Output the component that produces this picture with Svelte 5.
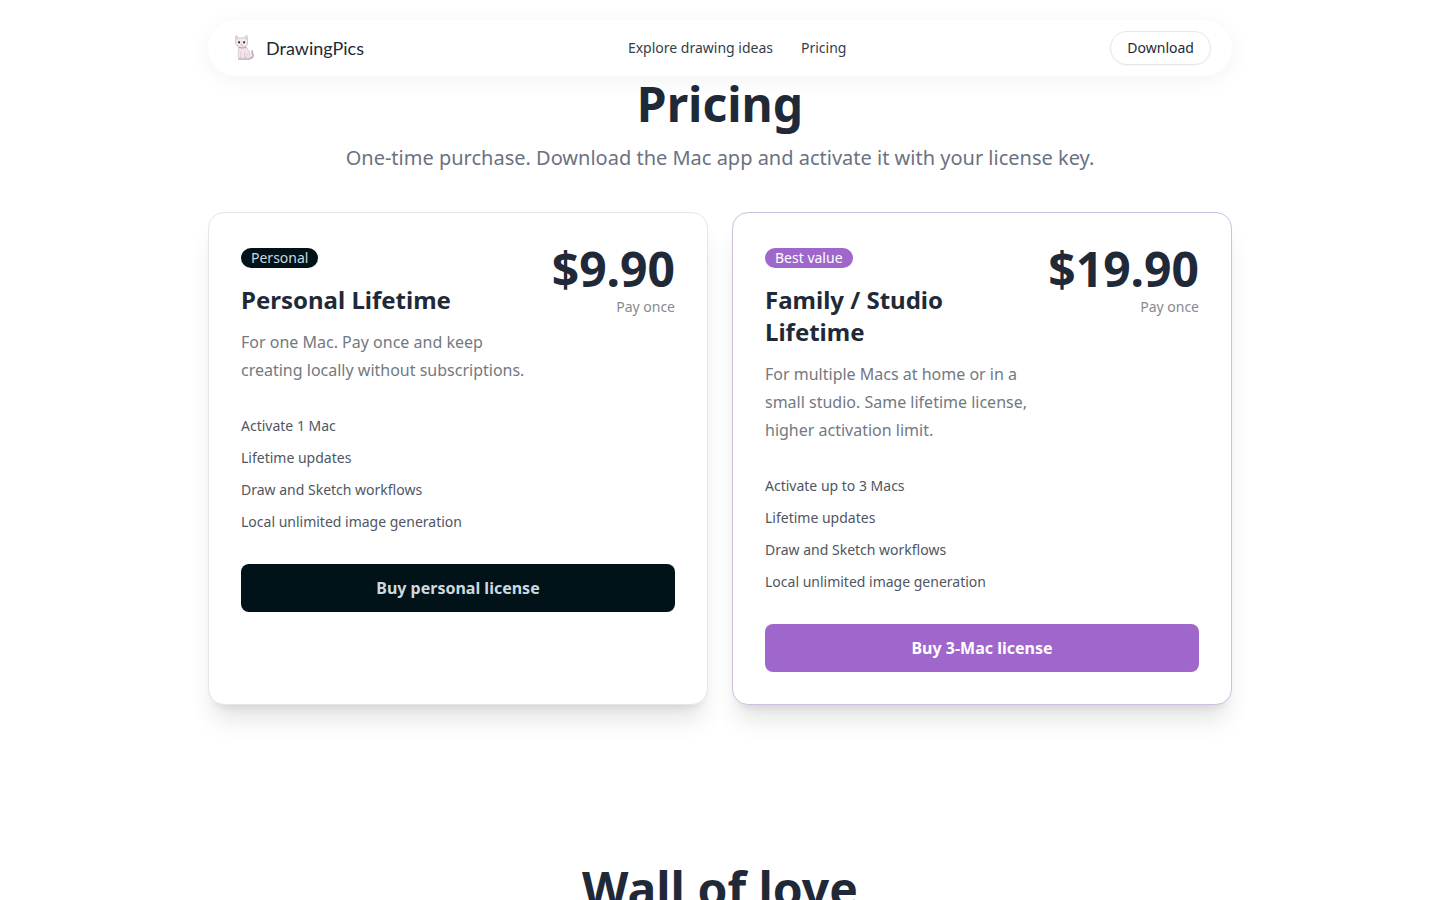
<script lang="ts">
	interface Plan {
		id: string;
		badge: string;
		name: string;
		description: string;
		price: string;
		features: string[];
		cta: string;
		featured: boolean;
	}

	const plans: Plan[] = [
		{
			id: 'personal',
			badge: 'Personal',
			name: 'Personal Lifetime',
			description: 'For one Mac. Pay once and keep creating locally without subscriptions.',
			price: '$9.90',
			features: ['Activate 1 Mac', 'Lifetime updates', 'Draw and Sketch workflows', 'Local unlimited image generation'],
			cta: 'Buy personal license',
			featured: false
		},
		{
			id: 'family',
			badge: 'Best value',
			name: 'Family / Studio Lifetime',
			description: 'For multiple Macs at home or in a small studio. Same lifetime license, higher activation limit.',
			price: '$19.90',
			features: ['Activate up to 3 Macs', 'Lifetime updates', 'Draw and Sketch workflows', 'Local unlimited image generation'],
			cta: 'Buy 3-Mac license',
			featured: true
		}
	];
</script>

<div class="page">
	<header class="navbar">
		<a class="brand" href="#top">
			<svg class="cat" viewBox="0 0 24 28" aria-hidden="true">
				<path d="M15.500 24.300c3 .2 4.600-1.400 4.400-3.200-.1-1.500-1.300-2.200-.8-3.900" fill="none" stroke="#b79bae" stroke-width="1.800" stroke-linecap="round" />
				<path d="M15.800 24c2.600.1 3.500-1.300 3.400-2.800-.1-1.300-1-2.200-.6-3.600" fill="none" stroke="#eddde7" stroke-width=".8" stroke-linecap="round" />
				<path d="M6 12.500c-.9 4-.9 8.500-.5 12.500h10.900c1.500-2.600.7-6.500-1.300-9.200l-2-3.500z" fill="#f1e4ec" stroke="#c5aebe" stroke-width=".6" />
				<path d="M2.800 7.500 2.600 2.400c0-.6.500-.8.900-.5l2.900 2.300c1.500-.4 3-.4 4.500-.1l2.300-2.500c.4-.4.900-.2 1 .3l.3 5.900c.4 3.500-2 5.600-5.800 5.600S2.100 11.200 2.800 7.500z" fill="#f4eaf0" stroke="#b9a0b1" stroke-width=".6" />
				<path d="M3.600 5.500V3.400l1.700 1.400zM13.600 5.200l-.1-2.300-1.600 1.800z" fill="#d9a9bf" />
				<circle cx="6.100" cy="8.300" r="1.100" fill="#30232c" />
				<circle cx="11.100" cy="8.300" r="1.100" fill="#30232c" />
				<path d="M8.100 9.800h1.200l-.6.8z" fill="#bc6c88" />
				<path d="M7.300 11.200q.8.600 1.400-.5.700 1.100 1.400.5" fill="none" stroke="#8b6c7d" stroke-width=".4" />
				<path d="M5.900 13.500q3.300 1.300 7 0" fill="none" stroke="#c28ead" stroke-width=".9" />
				<path d="M7.800 18v6.500M11.500 18v6.500M15 19.500c-1.600.8-1.900 3-1.500 5" fill="none" stroke="#ceb7c7" stroke-width=".6" />
				<path d="M5.500 25.500c0-1.500 3.800-1.500 3.800 0zM9.800 25.500c0-1.500 3.600-1.500 3.600 0zM13.400 25.500c0-1.400 2.900-1.400 3.100 0z" fill="#f2dde7" stroke="#b89aad" stroke-width=".5" />
			</svg>
			<span>DrawingPics</span>
		</a>
		<nav class="links">
			<a href="#ideas">Explore drawing ideas</a>
			<a href="#pricing">Pricing</a>
		</nav>
		<button class="download" type="button">Download</button>
	</header>

	<main>
		<section id="pricing">
			<h2>Pricing</h2>
			<p class="lead">One-time purchase. Download the Mac app and activate it with your license key.</p>

			<div class="plans">
				{#each plans as plan (plan.id)}
					<article class="card" class:featured={plan.featured}>
						<div class="summary">
							<div class="about">
								<span class="badge">{plan.badge}</span>
								<h3>{plan.name}</h3>
								<p>{plan.description}</p>
							</div>
							<div class="cost">
								<div class="price">{plan.price}</div>
								<div class="term">Pay once</div>
							</div>
						</div>
						<ul>
							{#each plan.features as feature}
								<li>{feature}</li>
							{/each}
						</ul>
						<button class="buy" type="button">{plan.cta}</button>
					</article>
				{/each}
			</div>
		</section>

		<section class="love" id="love">
			<h2>Wall of love</h2>
		</section>
	</main>
</div>

<style>
	:global(body) {
		background: #fff;
	}
	.page {
		max-width: 1024px;
		margin: 0 auto;
		padding-top: 20px;
		font-family: "Noto Sans", sans-serif;
		font-size: 16px;
		color: #1f2937;
	}
	h2, h3, p, ul {
		margin: 0;
		padding: 0;
	}
	a {
		color: inherit;
		text-decoration: none;
	}
	button {
		font-family: inherit;
		cursor: pointer;
	}

	.navbar {
		position: sticky;
		top: 20px;
		z-index: 10;
		display: flex;
		align-items: center;
		justify-content: space-between;
		box-sizing: border-box;
		height: 56px;
		padding: 0 21px 0 24px;
		border-radius: 28px;
		background: #fff;
		box-shadow: 0 4px 24px rgba(0, 0, 0, 0.05);
	}
	.brand {
		display: flex;
		align-items: center;
		gap: 8px;
		font-family: Lato, sans-serif;
		font-size: 18px;
		line-height: 28px;
	}
	.cat {
		width: 26px;
		height: 28px;
	}
	.links {
		display: flex;
		gap: 28px;
		font-size: 14px;
		line-height: 20px;
		color: #353e4b;
	}
	.download {
		height: 34px;
		padding: 0 16px;
		border: 1px solid #e5e7eb;
		border-radius: 17px;
		background: #fff;
		color: #1f2937;
		font-size: 14px;
		line-height: 20px;
		box-shadow: 0 1px 2px rgba(0, 0, 0, 0.04);
	}

	main {
		padding-top: 4px;
	}
	h2 {
		font-size: 48px;
		line-height: 48px;
		font-weight: 700;
		text-align: center;
	}
	.lead {
		margin-top: 16px;
		font-size: 20px;
		line-height: 28px;
		text-align: center;
		color: #6b7280;
	}
	.plans {
		display: grid;
		grid-template-columns: 1fr 1fr;
		gap: 24px;
		margin-top: 40px;
	}
	.card {
		padding: 32px;
		border: 1px solid #e5e6e8;
		border-radius: 16px;
		background: #fff;
		box-shadow: 0 20px 25px -5px rgba(0, 0, 0, 0.1), 0 8px 10px -6px rgba(0, 0, 0, 0.1);
	}
	.card.featured {
		border-color: #cfbfe0;
	}
	.summary {
		display: flex;
		justify-content: space-between;
		align-items: flex-start;
		gap: 16px;
	}
	.about {
		display: flex;
		flex-direction: column;
		align-items: flex-start;
		padding-top: 3px;
	}
	.badge {
		padding: 0 10px;
		border-radius: 10px;
		background: #011318;
		color: #cdd9df;
		font-size: 14px;
		line-height: 20px;
	}
	.featured .badge {
		background: #9f66cc;
		color: #fff;
	}
	h3 {
		margin-top: 16px;
		font-size: 24px;
		line-height: 32px;
		font-weight: 700;
	}
	.about p {
		margin-top: 12px;
		line-height: 28px;
		color: #737981;
	}
	.cost {
		flex-shrink: 0;
		text-align: right;
	}
	.price {
		font-size: 48px;
		line-height: 48px;
		font-weight: 700;
	}
	.term {
		margin-top: 4px;
		font-size: 14px;
		line-height: 20px;
		color: #868b92;
	}
	ul {
		display: flex;
		flex-direction: column;
		gap: 12px;
		margin-top: 32px;
		list-style: none;
		font-size: 14px;
		line-height: 20px;
		color: #4f5661;
	}
	.buy {
		width: 100%;
		height: 48px;
		margin-top: 32px;
		border: 0;
		border-radius: 8px;
		background: #011318;
		color: #cdd9df;
		font-size: 16px;
		font-weight: 700;
	}
	.featured .buy {
		background: #9f66cc;
		color: #fff;
	}
	.love {
		padding: 160px 0 96px;
	}

	@media (max-width: 800px) {
		.plans {
			grid-template-columns: 1fr;
		}
	}
</style>
